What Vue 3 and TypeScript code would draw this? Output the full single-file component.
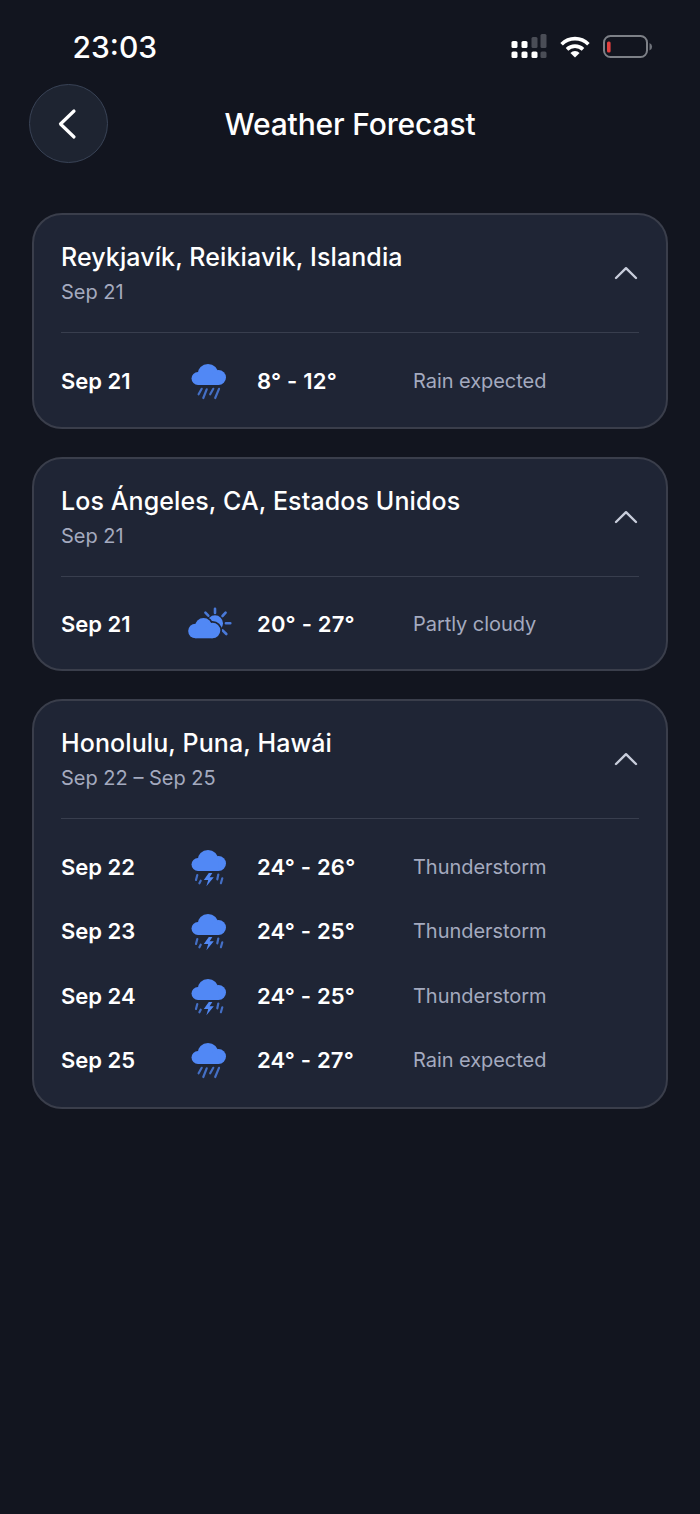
<script setup lang="ts">
type Kind = 'rain' | 'sun' | 'storm'
interface Day { date: string; kind: Kind; temp: string; text: string }
interface Place { name: string; range: string; days: Day[] }
const places: Place[] = [
  { name: 'Reykjavík, Reikiavik, Islandia', range: 'Sep 21', days: [
    { date: 'Sep 21', kind: 'rain', temp: '8° - 12°', text: 'Rain expected' } ] },
  { name: 'Los Ángeles, CA, Estados Unidos', range: 'Sep 21', days: [
    { date: 'Sep 21', kind: 'sun', temp: '20° - 27°', text: 'Partly cloudy' } ] },
  { name: 'Honolulu, Puna, Hawái', range: 'Sep 22 – Sep 25', days: [
    { date: 'Sep 22', kind: 'storm', temp: '24° - 26°', text: 'Thunderstorm' },
    { date: 'Sep 23', kind: 'storm', temp: '24° - 25°', text: 'Thunderstorm' },
    { date: 'Sep 24', kind: 'storm', temp: '24° - 25°', text: 'Thunderstorm' },
    { date: 'Sep 25', kind: 'rain', temp: '24° - 27°', text: 'Rain expected' } ] },
]
</script>

<template>
  <div class="page">
    <div class="status">
      <span class="time">23:03</span>
      <div class="status-icons">
        <svg class="signal" width="36" height="26" viewBox="0 0 36 26">
          <rect x="0.5" y="7" width="6" height="7" rx="1.6" fill="#fff" />
          <rect x="10.5" y="7" width="6" height="7" rx="1.6" fill="#fff" />
          <rect x="20.5" y="3" width="6" height="11" rx="1.5" fill="#4a4d56" />
          <rect x="29.5" y="0" width="6" height="14" rx="1.5" fill="#4a4d56" />
          <rect x="0.5" y="17.5" width="6" height="6.5" rx="1.6" fill="#fff" />
          <rect x="10.5" y="17.5" width="6" height="6.5" rx="1.6" fill="#fff" />
          <rect x="20.5" y="17.5" width="6" height="6.5" rx="1.6" fill="#fff" />
          <rect x="29.5" y="17.5" width="6" height="6.5" rx="1.5" fill="#4a4d56" />
        </svg>
        <svg class="wifi" width="30" height="22" viewBox="0 0 30 22" fill="none" stroke="#fff" stroke-width="3.6">
          <path d="M1.6 8.2 A19 19 0 0 1 28.4 8.2" />
          <path d="M7 13.4 A11.5 11.5 0 0 1 23 13.4" />
          <path d="M15 21.5 L10.4 16.9 A6.5 6.5 0 0 1 19.6 16.9 Z" fill="#fff" stroke="none" />
        </svg>
        <svg class="battery" width="50" height="24" viewBox="0 0 50 24">
          <rect x="1" y="1" width="43" height="21" rx="6.5" fill="none" stroke="#7d8087" stroke-width="2" />
          <rect x="4" y="6.5" width="3.6" height="11" rx="1.5" fill="#e2403f" />
          <path d="M46.5 8 a4 4 0 0 1 0 7.5 Z" fill="#6f727a" />
        </svg>
      </div>
    </div>

    <header class="head">
      <button class="back" aria-label="Back">
        <svg width="20" height="32" viewBox="0 0 20 32" fill="none" stroke="#fff" stroke-width="3.2" stroke-linecap="round" stroke-linejoin="round">
          <path d="M17 3 L3.5 16 L17 29" />
        </svg>
      </button>
      <h1 class="title">Weather Forecast</h1>
    </header>

    <main class="list">
      <section v-for="p in places" :key="p.name" class="card">
        <div class="card-top">
          <div>
            <h2 class="name">{{ p.name }}</h2>
            <p class="range">{{ p.range }}</p>
          </div>
          <svg class="chev" width="26" height="16" viewBox="0 0 26 16" fill="none" stroke="#c8cddb" stroke-width="2.4" stroke-linecap="round" stroke-linejoin="round">
            <path d="M3 13 L13 3.2 L23 13" />
          </svg>
        </div>
        <div class="days">
          <div v-for="d in p.days" :key="d.date" class="day">
            <span class="date">{{ d.date }}</span>
            <svg class="ico" width="44" height="44" viewBox="0 0 44 44">
              <template v-if="d.kind === 'rain'">
                <g fill="#5188f5">
                  <circle cx="10" cy="19.5" r="6.5" />
                  <circle cx="20" cy="15.5" r="10.5" />
                  <circle cx="30.5" cy="18.5" r="7.5" />
                  <rect x="10" y="16" width="20.5" height="10" />
                </g>
                <path d="M13.7 29.8 L10.6 35.3 M18.7 30.3 L15.3 39 M25.3 29.8 L22.2 35.3 M31 29.8 L27.2 39" stroke="#5188f5" stroke-width="2.2" stroke-linecap="round" opacity=".75" />
              </template>
              <template v-else-if="d.kind === 'storm'">
                <g fill="#5188f5">
                  <circle cx="10" cy="19.5" r="6.5" />
                  <circle cx="20" cy="15.5" r="10.5" />
                  <circle cx="30.5" cy="18.5" r="7.5" />
                  <rect x="10" y="16" width="20.5" height="10" />
                </g>
                <path d="M9.3 30 L8 35 M12.7 35.7 L11.4 38.3 M30.3 29.5 L29.3 34.3 M34.3 33.3 L32.9 38.3" stroke="#5188f5" stroke-width="2.2" stroke-linecap="round" opacity=".75" />
                <path d="M20.8 28 L15.8 35 H20.2 L18.4 41.3 L25.8 32.2 H21.6 L24.4 28 Z" fill="#5188f5" />
              </template>
              <template v-else>
                <circle cx="27" cy="21.3" r="8" fill="#5188f5" />
                <path d="M27 6.8 V11 M17.4 10.7 L20.3 13.7 M37.6 10.7 L34.5 14 M37.9 21.3 H42.3 M34.6 28.3 L38.3 32" stroke="#5188f5" stroke-width="2.6" stroke-linecap="round" opacity=".85" />
                <g fill="#1f2535" stroke="#1f2535" stroke-width="3.4">
                  <circle cx="15.5" cy="24.5" r="8.5" />
                  <circle cx="24.5" cy="28.5" r="7.8" />
                </g>
                <g fill="#5188f5">
                  <circle cx="7.5" cy="29" r="7.3" />
                  <circle cx="15.5" cy="24.5" r="8.5" />
                  <circle cx="24.5" cy="28.5" r="7.8" />
                  <rect x="7.5" y="26" width="17" height="10.3" />
                </g>
              </template>
            </svg>
            <span class="temp">{{ d.temp }}</span>
            <span class="desc">{{ d.text }}</span>
          </div>
        </div>
      </section>
    </main>
  </div>
</template>

<style>
html, body { margin: 0; background: #12151f; }
</style>

<style scoped>
.page {
  width: 700px;
  height: 1514px;
  background: #12151f;
  color: #fff;
  font-family: Inter, "Noto Sans", sans-serif;
  overflow: hidden;
}
.status {
  height: 84px;
  padding: 0 47px 0 72.5px;
  box-sizing: border-box;
  display: flex;
  justify-content: space-between;
}
.time {
  font-size: 30px;
  font-weight: 500;
  line-height: 36px;
  margin-top: 29px;
}
.status-icons { display: flex; align-items: flex-start; padding-top: 34px; }
.wifi { margin: 2px 0 0 13px; }
.battery { margin: 1px 0 0 13px; }
.head {
  display: grid;
  grid-template-columns: 79px 1fr 79px;
  align-items: center;
  padding: 0 29px;
  height: 79px;
}
.back {
  grid-column: 1;
  width: 79px;
  height: 79px;
  border-radius: 50%;
  border: 1.5px solid #394356;
  background: #1e2431;
  padding: 0 4px 0 0;
  display: flex;
  align-items: center;
  justify-content: center;
  box-sizing: border-box;
}
.title {
  grid-column: 2;
  margin: 0;
  text-align: center;
  font-size: 30px;
  font-weight: 500;
  line-height: 36px;
  letter-spacing: -0.15px;
}
.list {
  display: flex;
  flex-direction: column;
  gap: 28px;
  padding: 50px 32px 0;
}
.card {
  background: #1f2535;
  border: 2px solid #3a3e4b;
  border-radius: 30px;
  padding: 0 27px;
}
.card-top {
  display: flex;
  justify-content: space-between;
  padding: 24px 0 25px;
  border-bottom: 1px solid #383e4e;
}
.name {
  margin: 0;
  font-size: 25px;
  font-weight: 500;
  line-height: 36px;
  letter-spacing: 0.1px;
}
.range {
  margin: 2px 0 0;
  font-size: 20px;
  line-height: 30px;
  color: #a4aabf;
}
.chev { margin: 26px 0 0 0; }
.days { padding: 16px 0 14px; }
.card:nth-child(2) .days { padding: 14px 0 13px; }
.card:nth-child(3) .days { padding: 16px 0 15px; }
.day {
  display: grid;
  grid-template-columns: 127px 69px 156px 1fr;
  align-items: center;
  height: 64.4px;
}
.date { font-size: 22px; font-weight: 600; }
.ico { display: block; }
.temp { font-size: 22px; font-weight: 600; letter-spacing: 0.2px; }
.desc { font-size: 20px; color: #a4aabf; letter-spacing: -0.05px; }
</style>
